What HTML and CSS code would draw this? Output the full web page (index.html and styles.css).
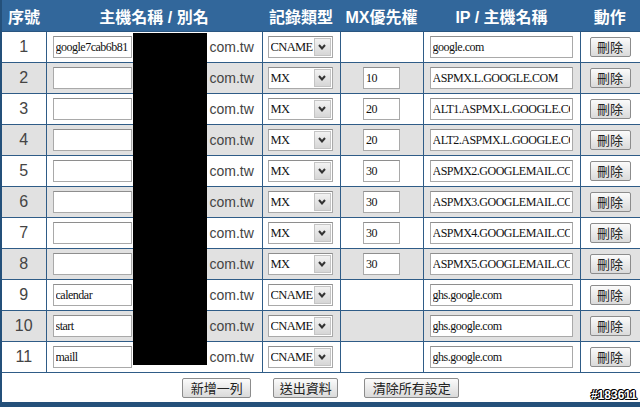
FILE: index.html
```html
<!DOCTYPE html>
<html lang="zh-Hant">
<head>
    <meta charset="UTF-8">
    <title>DNS 記錄設定</title>
    <link rel="stylesheet" href="styles.css">
</head>
<body>
    <div class="page">
        <table class="records">
            <colgroup>
                <col class="c-no">
                <col class="c-host">
                <col class="c-type">
                <col class="c-mx">
                <col class="c-ip">
                <col class="c-act">
            </colgroup>
            <thead>
                <tr>
                    <th>序號</th>
                    <th>主機名稱 / 別名</th>
                    <th>記錄類型</th>
                    <th>MX優先權</th>
                    <th>IP / 主機名稱</th>
                    <th>動作</th>
                </tr>
            </thead>
            <tbody>
                <tr>
                    <td class="no">1</td>
                    <td class="host"><input class="in-host" type="text" value="google7cab6b81"><span class="domain">com.tw</span></td>
                    <td class="type"><div class="select"><select><option>CNAME</option></select><span class="arrow"><svg width="8" height="6" viewBox="0 0 8 6"><polyline points="1,1 4,4.5 7,1" fill="none" stroke="#333" stroke-width="2"/></svg></span></div></td>
                    <td class="mx"></td>
                    <td class="ip"><input class="in-ip" type="text" value="google.com"></td>
                    <td class="act"><button class="btn-del">刪除</button></td>
                </tr>
                <tr>
                    <td class="no">2</td>
                    <td class="host"><input class="in-host" type="text" value=""><span class="domain">com.tw</span></td>
                    <td class="type"><div class="select"><select><option>MX</option></select><span class="arrow"><svg width="8" height="6" viewBox="0 0 8 6"><polyline points="1,1 4,4.5 7,1" fill="none" stroke="#333" stroke-width="2"/></svg></span></div></td>
                    <td class="mx"><input class="in-mx" type="text" value="10"></td>
                    <td class="ip"><input class="in-ip" type="text" value="ASPMX.L.GOOGLE.COM"></td>
                    <td class="act"><button class="btn-del">刪除</button></td>
                </tr>
                <tr>
                    <td class="no">3</td>
                    <td class="host"><input class="in-host" type="text" value=""><span class="domain">com.tw</span></td>
                    <td class="type"><div class="select"><select><option>MX</option></select><span class="arrow"><svg width="8" height="6" viewBox="0 0 8 6"><polyline points="1,1 4,4.5 7,1" fill="none" stroke="#333" stroke-width="2"/></svg></span></div></td>
                    <td class="mx"><input class="in-mx" type="text" value="20"></td>
                    <td class="ip"><input class="in-ip" type="text" value="ALT1.ASPMX.L.GOOGLE.COM"></td>
                    <td class="act"><button class="btn-del">刪除</button></td>
                </tr>
                <tr>
                    <td class="no">4</td>
                    <td class="host"><input class="in-host" type="text" value=""><span class="domain">com.tw</span></td>
                    <td class="type"><div class="select"><select><option>MX</option></select><span class="arrow"><svg width="8" height="6" viewBox="0 0 8 6"><polyline points="1,1 4,4.5 7,1" fill="none" stroke="#333" stroke-width="2"/></svg></span></div></td>
                    <td class="mx"><input class="in-mx" type="text" value="20"></td>
                    <td class="ip"><input class="in-ip" type="text" value="ALT2.ASPMX.L.GOOGLE.COM"></td>
                    <td class="act"><button class="btn-del">刪除</button></td>
                </tr>
                <tr>
                    <td class="no">5</td>
                    <td class="host"><input class="in-host" type="text" value=""><span class="domain">com.tw</span></td>
                    <td class="type"><div class="select"><select><option>MX</option></select><span class="arrow"><svg width="8" height="6" viewBox="0 0 8 6"><polyline points="1,1 4,4.5 7,1" fill="none" stroke="#333" stroke-width="2"/></svg></span></div></td>
                    <td class="mx"><input class="in-mx" type="text" value="30"></td>
                    <td class="ip"><input class="in-ip" type="text" value="ASPMX2.GOOGLEMAIL.COM"></td>
                    <td class="act"><button class="btn-del">刪除</button></td>
                </tr>
                <tr>
                    <td class="no">6</td>
                    <td class="host"><input class="in-host" type="text" value=""><span class="domain">com.tw</span></td>
                    <td class="type"><div class="select"><select><option>MX</option></select><span class="arrow"><svg width="8" height="6" viewBox="0 0 8 6"><polyline points="1,1 4,4.5 7,1" fill="none" stroke="#333" stroke-width="2"/></svg></span></div></td>
                    <td class="mx"><input class="in-mx" type="text" value="30"></td>
                    <td class="ip"><input class="in-ip" type="text" value="ASPMX3.GOOGLEMAIL.COM"></td>
                    <td class="act"><button class="btn-del">刪除</button></td>
                </tr>
                <tr>
                    <td class="no">7</td>
                    <td class="host"><input class="in-host" type="text" value=""><span class="domain">com.tw</span></td>
                    <td class="type"><div class="select"><select><option>MX</option></select><span class="arrow"><svg width="8" height="6" viewBox="0 0 8 6"><polyline points="1,1 4,4.5 7,1" fill="none" stroke="#333" stroke-width="2"/></svg></span></div></td>
                    <td class="mx"><input class="in-mx" type="text" value="30"></td>
                    <td class="ip"><input class="in-ip" type="text" value="ASPMX4.GOOGLEMAIL.COM"></td>
                    <td class="act"><button class="btn-del">刪除</button></td>
                </tr>
                <tr>
                    <td class="no">8</td>
                    <td class="host"><input class="in-host" type="text" value=""><span class="domain">com.tw</span></td>
                    <td class="type"><div class="select"><select><option>MX</option></select><span class="arrow"><svg width="8" height="6" viewBox="0 0 8 6"><polyline points="1,1 4,4.5 7,1" fill="none" stroke="#333" stroke-width="2"/></svg></span></div></td>
                    <td class="mx"><input class="in-mx" type="text" value="30"></td>
                    <td class="ip"><input class="in-ip" type="text" value="ASPMX5.GOOGLEMAIL.COM"></td>
                    <td class="act"><button class="btn-del">刪除</button></td>
                </tr>
                <tr>
                    <td class="no">9</td>
                    <td class="host"><input class="in-host" type="text" value="calendar"><span class="domain">com.tw</span></td>
                    <td class="type"><div class="select"><select><option>CNAME</option></select><span class="arrow"><svg width="8" height="6" viewBox="0 0 8 6"><polyline points="1,1 4,4.5 7,1" fill="none" stroke="#333" stroke-width="2"/></svg></span></div></td>
                    <td class="mx"></td>
                    <td class="ip"><input class="in-ip" type="text" value="ghs.google.com"></td>
                    <td class="act"><button class="btn-del">刪除</button></td>
                </tr>
                <tr>
                    <td class="no">10</td>
                    <td class="host"><input class="in-host" type="text" value="start"><span class="domain">com.tw</span></td>
                    <td class="type"><div class="select"><select><option>CNAME</option></select><span class="arrow"><svg width="8" height="6" viewBox="0 0 8 6"><polyline points="1,1 4,4.5 7,1" fill="none" stroke="#333" stroke-width="2"/></svg></span></div></td>
                    <td class="mx"></td>
                    <td class="ip"><input class="in-ip" type="text" value="ghs.google.com"></td>
                    <td class="act"><button class="btn-del">刪除</button></td>
                </tr>
                <tr>
                    <td class="no">11</td>
                    <td class="host"><input class="in-host" type="text" value="maill"><span class="domain">com.tw</span></td>
                    <td class="type"><div class="select"><select><option>CNAME</option></select><span class="arrow"><svg width="8" height="6" viewBox="0 0 8 6"><polyline points="1,1 4,4.5 7,1" fill="none" stroke="#333" stroke-width="2"/></svg></span></div></td>
                    <td class="mx"></td>
                    <td class="ip"><input class="in-ip" type="text" value="ghs.google.com"></td>
                    <td class="act"><button class="btn-del">刪除</button></td>
                </tr>
            </tbody>
            <tfoot>
                <tr>
                    <td colspan="6" class="footer">
                        <div class="footer-buttons">
                            <button class="btn">新增一列</button>
                            <button class="btn">送出資料</button>
                            <button class="btn">清除所有設定</button>
                        </div>
                    </td>
                </tr>
            </tfoot>
        </table>

        <!-- zamazana domena -->
        <div class="redact"></div>
        <div class="watermark">#183611</div>
    </div>
</body>
</html>
```

FILE: styles.css
```css
/* Ogólne ustawienia */
body {
    margin: 0;
    padding: 0;
    background-color: #ffffff;
    font-family: "Liberation Sans", Arial, "Noto Sans CJK TC", sans-serif;
}

.page {
    position: relative;
    width: 640px;
    height: 407px;
    overflow: hidden;
}

/* Tabela */
.records {
    width: 640px;
    table-layout: fixed;
    border-collapse: collapse;
    border-left: 2px solid #24507a;
    border-right: 3px solid #24507a;
    border-bottom: 5px solid #24507a;
}

.c-no { width: 45px; }
.c-host { width: 216px; }
.c-type { width: 78px; }
.c-mx { width: 83px; }
.c-ip { width: 157px; }
.c-act { width: 61px; }

.records th {
    height: 31px;
    padding: 0;
    background-color: #32679b;
    color: #ffffff;
    font-family: "Liberation Sans", "Noto Sans CJK TC", sans-serif;
    font-size: 16px;
    font-weight: bold;
    text-align: center;
    border-bottom: 1px solid #2a5680;
}

.records td {
    height: 30px;
    padding: 0;
    border: 1px solid #2f5c87;
    vertical-align: middle;
}

.records tbody tr:nth-child(even) td {
    background-color: #e1e1e1;
}

.no {
    text-align: center;
    font-size: 16px;
    color: #444;
}

.host {
    padding-left: 6px !important;
    white-space: nowrap;
}

.type {
    padding-left: 5px !important;
}

.mx {
    text-align: center;
}

.ip {
    padding-left: 6px !important;
}

.act {
    text-align: center;
}

/* Pola tekstowe */
input[type="text"] {
    box-sizing: border-box;
    height: 22px;
    margin: 0;
    padding: 0 2px;
    border: 1px solid #a9a9a9;
    border-top-color: #8e8e8e;
    background-color: #ffffff;
    font-family: "Liberation Serif", "Times New Roman", serif;
    font-size: 12px;
    letter-spacing: -0.5px;
    color: #111;
    vertical-align: middle;
}

.in-host { width: 79px; }
.in-mx { width: 37px; }
.in-ip { width: 143px; }

.domain {
    display: inline-block;
    margin-left: 78px;
    font-size: 14px;
    color: #444;
    vertical-align: middle;
}

/* Lista rozwijana */
.select {
    display: flex;
    box-sizing: border-box;
    width: 65px;
    height: 22px;
    border: 1px solid #a9a9a9;
    border-top-color: #8e8e8e;
    background-color: #ffffff;
}

.select select {
    flex: 1;
    min-width: 0;
    margin: 0;
    padding: 0 0 0 2px;
    border: none;
    outline: none;
    background: transparent;
    appearance: none;
    -webkit-appearance: none;
    font-family: "Liberation Serif", "Times New Roman", serif;
    font-size: 12.5px;
    letter-spacing: -0.6px;
    color: #111;
}

.arrow {
    display: flex;
    justify-content: center;
    align-items: center;
    width: 15px;
    margin: 1px;
    border: 1px solid #c4c4c4;
    background: linear-gradient(#f2f2f2, #d6d6d6);
}

/* Przyciski */
.btn-del,
.btn {
    box-sizing: border-box;
    height: 20px;
    padding: 0;
    border: 1px solid #8c8c8c;
    border-radius: 2px;
    background: linear-gradient(#fbfbfb, #dadada);
    font-family: "Noto Sans CJK TC", sans-serif;
    font-size: 13px;
    line-height: 18px;
    color: #222;
    cursor: pointer;
}

.btn-del {
    width: 41px;
}

.footer {
    height: 29px !important;
    background-color: #ffffff;
    border-bottom: none !important;
}

.footer-buttons {
    display: flex;
    justify-content: center;
    gap: 22px;
    padding-top: 1px;
}

.footer-buttons .btn:nth-child(1) { width: 69px; }
.footer-buttons .btn:nth-child(2) { width: 65px; }
.footer-buttons .btn:nth-child(3) { width: 95px; margin-left: 4px; }

/* Nakładki */
.redact {
    position: absolute;
    left: 133px;
    top: 33px;
    width: 74px;
    height: 332px;
    background-color: #000000;
}

.watermark {
    position: absolute;
    right: 3px;
    bottom: 5px;
    font-family: "Liberation Sans", Arial, sans-serif;
    font-size: 12px;
    font-weight: bold;
    color: #ffffff;
    text-shadow: -1px 0 #000, 1px 0 #000, 0 -1px #000, 0 1px #000, 1px 1px #000, -1px -1px #000;
}
```
